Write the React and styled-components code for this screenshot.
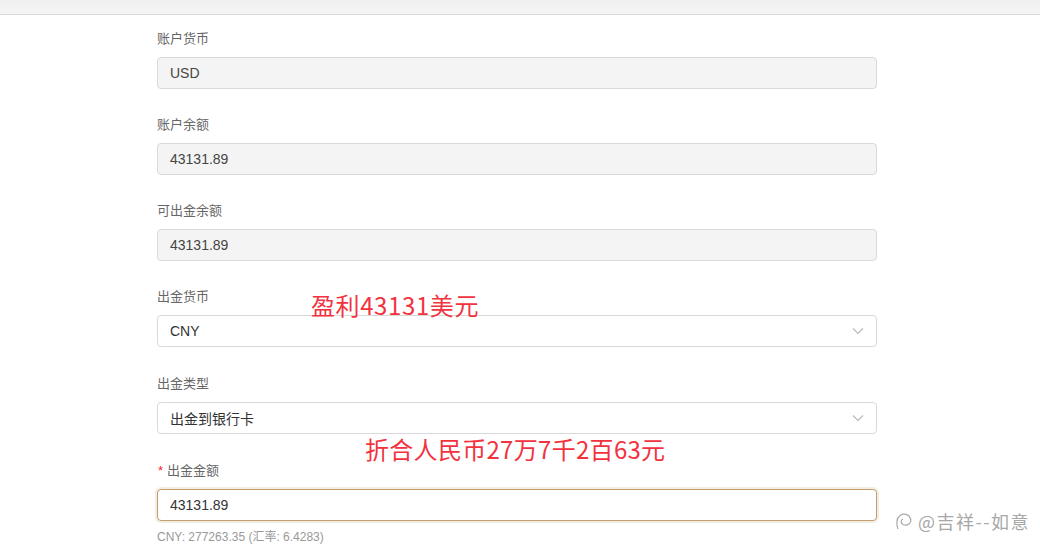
import styled, { createGlobalStyle } from "styled-components";

const GlobalStyle = createGlobalStyle`
  html, body {
    margin: 0;
    padding: 0;
    background: #fff;
  }
  body {
    font-family: "Liberation Sans", "Noto Sans CJK SC", sans-serif;
    overflow: hidden;
  }
`;

const Page = styled.div`
  position: relative;
  width: 1040px;
  height: 557px;
  overflow: hidden;
  background: #fff;
`;

const TopBar = styled.div`
  height: 14px;
  background: linear-gradient(#f0f0f0, #f5f5f5);
  border-bottom: 1px solid #dcdcdc;
`;

const Form = styled.div`
  width: 720px;
  margin-left: 157px;
  padding-top: 14px;
`;

const Field = styled.div`
  margin-bottom: ${(p) => p.$gap || 26}px;
`;

const Label = styled.div`
  height: 20px;
  line-height: 20px;
  font-size: 13px;
  color: #666;
  margin-bottom: 8px;
`;

const Star = styled.span`
  color: #f5222d;
  margin-right: 4px;
  margin-left: 1px;
`;

const Box = styled.div`
  box-sizing: border-box;
  height: 32px;
  padding: 0 12px;
  display: flex;
  align-items: center;
  justify-content: space-between;
  font-size: 14px;
  color: ${(p) => (p.$disabled ? "#444" : "#333")};
  background: ${(p) => (p.$disabled ? "#f4f4f4" : "#fff")};
  border: 1px solid ${(p) => (p.$focus ? "#c39d6b" : "#d9d9d9")};
  border-radius: 4px;
  box-shadow: ${(p) => (p.$focus ? "0 0 0 2px rgba(195,157,107,0.18)" : "none")};
`;

const Hint = styled.div`
  margin-top: 6px;
  font-size: 12px;
  color: #999;
`;

const Note = styled.div`
  position: absolute;
  left: ${(p) => p.$x}px;
  top: ${(p) => p.$y}px;
  font-family: "Noto Sans CJK SC", sans-serif;
  font-size: 24px;
  line-height: 30px;
  letter-spacing: ${(p) => p.$ls}px;
  color: #f2333f;
  white-space: nowrap;
`;

const Mark = styled.div`
  position: absolute;
  left: 894px;
  top: 508px;
  display: flex;
  align-items: center;
  gap: 5px;
  font-family: "Noto Sans CJK SC", sans-serif;
  font-size: 18px;
  letter-spacing: 1.5px;
  color: #a8a8a8;
  text-shadow: 0 0 2px #fff;
`;

const Chevron = () => (
  <svg width="12" height="8" viewBox="0 0 12 8" fill="none">
    <path d="M1 1.5 L6 6.5 L11 1.5" stroke="#b8b8b8" strokeWidth="1.1" />
  </svg>
);

const MarkIcon = () => (
  <svg width="19" height="20" viewBox="0 0 19 20" fill="none">
    <path
      d="M4 18 C2 13 2.5 7 6 4.5 C9.5 2 15 3 16.5 7.5 C18 12 13.5 15.5 9 13.5 C6.5 12.3 6.5 9 9 8"
      stroke="#a8a8a8"
      strokeWidth="1.2"
    />
  </svg>
);

export default function App() {
  return (
    <Page>
      <GlobalStyle />
      <TopBar />
      <Form>
        <Field>
          <Label>账户货币</Label>
          <Box $disabled>USD</Box>
        </Field>
        <Field>
          <Label>账户余额</Label>
          <Box $disabled>43131.89</Box>
        </Field>
        <Field>
          <Label>可出金余额</Label>
          <Box $disabled>43131.89</Box>
        </Field>
        <Field $gap={27}>
          <Label>出金货币</Label>
          <Box>
            CNY
            <Chevron />
          </Box>
        </Field>
        <Field $gap={27}>
          <Label>出金类型</Label>
          <Box>
            出金到银行卡
            <Chevron />
          </Box>
        </Field>
        <Field>
          <Label>
            <Star>*</Star>出金金额
          </Label>
          <Box $focus>43131.89</Box>
          <Hint>CNY: 277263.35 (汇率: 6.4283)</Hint>
        </Field>
      </Form>
      <Note $x={311} $y={290} $ls={0.6}>盈利43131美元</Note>
      <Note $x={365} $y={434} $ls={0.3}>折合人民币27万7千2百63元</Note>
      <Mark>
        <MarkIcon />
        <span>@吉祥--如意</span>
      </Mark>
    </Page>
  );
}
